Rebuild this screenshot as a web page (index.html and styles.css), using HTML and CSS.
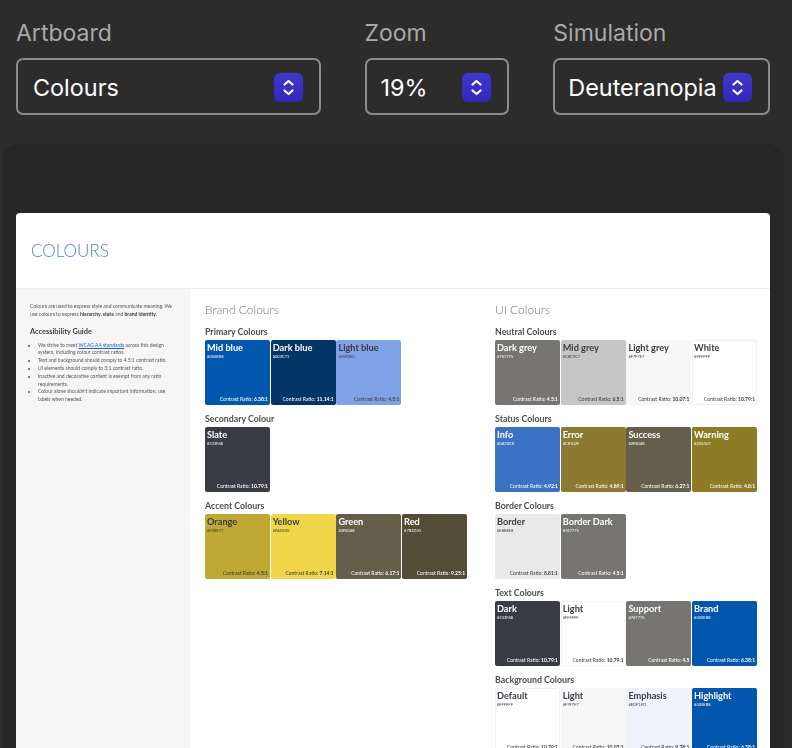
FILE: index.html
```html
<!DOCTYPE html>
<html lang="en">

<head>
    <meta charset="UTF-8">
    <title>Colour Simulation</title>
    <link rel="stylesheet" href="styles.css">
</head>

<body>
    <svg class="defs" width="0" height="0">
        <symbol id="updown" viewBox="0 0 29 29">
            <path d="M10.5 11.5 14.5 8l4 3.500M10.500 17.500l4 3.500 4-3.500" fill="none" stroke="#fff" stroke-width="2.200" stroke-linecap="round" stroke-linejoin="round" />
        </symbol>
    </svg>

    <div class="controls">
        <div class="field field-artboard">
            <div class="field-label">Artboard</div>
            <div class="select"><span>Colours</span><svg class="select-icon"><use href="#updown" /></svg></div>
        </div>
        <div class="field field-zoom">
            <div class="field-label">Zoom</div>
            <div class="select"><span>19%</span><svg class="select-icon"><use href="#updown" /></svg></div>
        </div>
        <div class="field field-simulation">
            <div class="field-label">Simulation</div>
            <div class="select"><span>Deuteranopia</span><svg class="select-icon"><use href="#updown" /></svg></div>
        </div>
    </div>

    <div class="panel">
        <div class="artboard">
            <div class="artboard-header">COLOURS</div>
            <div class="artboard-body">
                <div class="sidebar">
                    <p>Colours are used to express style and communicate meaning. We use colours to express <b>hierarchy, state</b> and <b>brand identity</b>.</p>
                    <h4>Accessibility Guide</h4>
                    <ul>
                        <li>We strive to meet <a href="#">WCAG AA standards</a> across this design system, including colour contrast ratios.</li>
                        <li>Text and background should comply to 4.5:1 contrast ratio.</li>
                        <li>UI elements should comply to 3:1 contrast ratio.</li>
                        <li>Inactive and decorative content is exempt from any ratio requirements.</li>
                        <li>Colour alone shouldn't indicate important information, use labels when needed.</li>
                    </ul>
                </div>

                <div class="col">
                    <h2>Brand Colours</h2>

                    <h3>Primary Colours</h3>
                    <div class="swatches">
                        <div class="swatch on-dark c-midblue"><strong>Mid blue</strong><small>#005EB8</small><em>Contrast Ratio: <b>6.38:1</b></em></div>
                        <div class="swatch on-dark c-darkblue"><strong>Dark blue</strong><small>#003C71</small><em>Contrast Ratio: <b>11.14:1</b></em></div>
                        <div class="swatch c-lightblue"><strong>Light blue</strong><small>#5080E0</small><em>Contrast Ratio: <b>4.5:1</b></em></div>
                    </div>

                    <h3>Secondary Colour</h3>
                    <div class="swatches">
                        <div class="swatch on-dark c-slate"><strong>Slate</strong><small>#333F48</small><em>Contrast Ratio: <b>10.79:1</b></em></div>
                    </div>

                    <h3>Accent Colours</h3>
                    <div class="swatches">
                        <div class="swatch c-orange"><strong>Orange</strong><small>#E98E77</small><em>Contrast Ratio: <b>4.5:1</b></em></div>
                        <div class="swatch c-yellow"><strong>Yellow</strong><small>#FAC820</small><em>Contrast Ratio: <b>7.14:1</b></em></div>
                        <div class="swatch on-dark c-olive"><strong>Green</strong><small>#2F8348</small><em>Contrast Ratio: <b>6.17:1</b></em></div>
                        <div class="swatch on-dark c-red"><strong>Red</strong><small>#7B2D25</small><em>Contrast Ratio: <b>9.25:1</b></em></div>
                    </div>
                </div>

                <div class="col">
                    <h2>UI Colours</h2>

                    <h3>Neutral Colours</h3>
                    <div class="swatches">
                        <div class="swatch on-dark c-darkgrey"><strong>Dark grey</strong><small>#767775</small><em>Contrast Ratio: <b>4.5:1</b></em></div>
                        <div class="swatch c-midgrey"><strong>Mid grey</strong><small>#C8C9C7</small><em>Contrast Ratio: <b>6.5:1</b></em></div>
                        <div class="swatch c-lightgrey"><strong>Light grey</strong><small>#F7F7F7</small><em>Contrast Ratio: <b>10.07:1</b></em></div>
                        <div class="swatch c-white"><strong>White</strong><small>#FFFFFF</small><em>Contrast Ratio: <b>10.79:1</b></em></div>
                    </div>

                    <h3>Status Colours</h3>
                    <div class="swatches">
                        <div class="swatch on-dark c-info"><strong>Info</strong><small>#0A70C8</small><em>Contrast Ratio: <b>4.92:1</b></em></div>
                        <div class="swatch on-dark c-error"><strong>Error</strong><small>#C8102F</small><em>Contrast Ratio: <b>4.89:1</b></em></div>
                        <div class="swatch on-dark c-olive"><strong>Success</strong><small>#2F8048</small><em>Contrast Ratio: <b>6.27:1</b></em></div>
                        <div class="swatch on-dark c-warning"><strong>Warning</strong><small>#C05107</small><em>Contrast Ratio: <b>4.8:1</b></em></div>
                    </div>

                    <h3>Border Colours</h3>
                    <div class="swatches">
                        <div class="swatch c-border"><strong>Border</strong><small>#E8E8E8</small><em>Contrast Ratio: <b>8.81:1</b></em></div>
                        <div class="swatch on-dark c-darkgrey"><strong>Border Dark</strong><small>#767775</small><em>Contrast Ratio: <b>4.5:1</b></em></div>
                    </div>

                    <h3>Text Colours</h3>
                    <div class="swatches">
                        <div class="swatch on-dark c-slate"><strong>Dark</strong><small>#333F48</small><em>Contrast Ratio: <b>10.79:1</b></em></div>
                        <div class="swatch c-white"><strong>Light</strong><small>#FFFFFF</small><em>Contrast Ratio: <b>10.79:1</b></em></div>
                        <div class="swatch on-dark c-darkgrey"><strong>Support</strong><small>#767775</small><em>Contrast Ratio: <b>4.5</b></em></div>
                        <div class="swatch on-dark c-midblue"><strong>Brand</strong><small>#005EB8</small><em>Contrast Ratio: <b>6.38:1</b></em></div>
                    </div>

                    <h3>Background Colours</h3>
                    <div class="swatches">
                        <div class="swatch c-white"><strong>Default</strong><small>#FFFFFF</small><em>Contrast Ratio: <b>10.79:1</b></em></div>
                        <div class="swatch c-lightgrey"><strong>Light</strong><small>#F7F7F7</small><em>Contrast Ratio: <b>10.07:1</b></em></div>
                        <div class="swatch c-emphasis"><strong>Emphasis</strong><small>#EDF1FD</small><em>Contrast Ratio: <b>9.78:1</b></em></div>
                        <div class="swatch on-dark c-midblue"><strong>Highlight</strong><small>#005EB8</small><em>Contrast Ratio: <b>6.38:1</b></em></div>
                    </div>
                </div>
            </div>
        </div>
    </div>
</body>

</html>
```

FILE: styles.css
```css
html,
body {
    height: 748px;
    overflow: hidden;
}

body {
    margin: 0;
    background-color: #2c2c2c;
    font-family: Inter, "Liberation Sans", sans-serif;
}

.defs {
    position: absolute;
}

/* top controls */
.controls {
    display: flex;
    gap: 44px;
    padding: 19px 22px 0 16px;
    height: 126px;
    box-sizing: border-box;
}

.field-artboard {
    width: 305px;
}

.field-zoom {
    width: 145px;
}

.field-simulation {
    width: 217px;
}

.field-label {
    color: #a9a9a9;
    font-size: 23px;
    line-height: 29px;
    margin-bottom: 10px;
}

.select {
    display: flex;
    justify-content: space-between;
    align-items: center;
    height: 57px;
    box-sizing: border-box;
    padding: 1px 16px 0 15px;
    border: 2px solid #8c8c8c;
    border-radius: 7px;
    color: #fff;
    font-size: 23.400px;
}

.field-zoom .select {
    padding-left: 14px;
}

.field-simulation .select {
    padding-left: 13px;
}

.select-icon {
    width: 29px;
    height: 29px;
    flex-shrink: 0;
    border-radius: 6px;
    background: linear-gradient(#3f38c9, #3426bf);
}

/* preview */
.panel {
    margin: 18px 8px 0 2px;
    height: 620px;
    padding: 69px 14px 0 14px;
    background-color: #262626;
    border-radius: 16px 16px 0 0;
}

.artboard {
    height: 560px;
    background-color: #fff;
    border-radius: 4px 4px 0 0;
    overflow: hidden;
    color: #3a3c45;
    font-family: Lato, "Open Sans", sans-serif;
    filter: blur(0.500px);
}

.artboard-header {
    height: 76px;
    box-sizing: border-box;
    padding: 27px 0 0 15px;
    border-bottom: 1px solid #efefef;
    color: #4f7fd6;
    font-size: 17px;
    line-height: 22px;
    font-weight: 300;
}

.artboard-body {
    display: flex;
}

.sidebar {
    width: 174px;
    height: 470px;
    flex-shrink: 0;
    box-sizing: border-box;
    padding: 14px 17px 0 14px;
    background-color: #f6f6f6;
    font-size: 5px;
    line-height: 7.800px;
    color: #55575e;
}

.sidebar p {
    margin: 0 0 8px 0;
}

.sidebar b {
    font-weight: 700;
    color: #3a3c45;
}

.sidebar h4 {
    margin: 0 0 5px 0;
    color: #3a3c45;
    font-size: 7.400px;
    line-height: 10px;
    font-weight: 700;
}

.sidebar ul {
    margin: 0;
    padding: 0 0 0 8px;
}

.sidebar a {
    color: #1f5fc0;
}

.col {
    width: 290px;
    flex-shrink: 0;
    padding: 13px 0 0 15px;
    box-sizing: border-box;
}

.col h2 {
    margin: 0 0 10px 0;
    color: #777;
    font-size: 12px;
    line-height: 15px;
    font-weight: 300;
}

.col h3 {
    margin: 0 0 3px 0;
    font-size: 8.800px;
    line-height: 10px;
    font-weight: 700;
    color: #4b4d54;
}

.swatches {
    display: flex;
    gap: 0.700px;
    margin-bottom: 9px;
}

.swatch {
    display: flex;
    flex-direction: column;
    width: 65px;
    height: 65px;
    box-sizing: border-box;
    padding: 2px 2px 2px 2px;
    border-radius: 2px;
    color: #3a3c45;
}

.swatch strong {
    font-size: 9.200px;
    line-height: 12px;
    font-weight: 700;
}

.swatch small {
    font-size: 4px;
    line-height: 6px;
}

.swatch em {
    margin-top: auto;
    font-size: 5px;
    line-height: 7px;
    font-style: normal;
    text-align: right;
}

.on-dark {
    color: #fff;
}

.c-midblue { background-color: #0256ae; }
.c-darkblue { background-color: #043569; }
.c-lightblue { background-color: #7fa1e6; }
.c-slate { background-color: #3a3c45; }
.c-orange { background-color: #bfa833; }
.c-yellow { background-color: #efd548; }
.c-olive { background-color: #665e4a; }
.c-red { background-color: #544c36; }
.c-darkgrey { background-color: #767572; }
.c-midgrey { background-color: #c6c6c6; }
.c-lightgrey { background-color: #f7f7f7; }
.c-white { background-color: #fff; box-shadow: inset 0 0 0 1px #f1f1f1; }
.c-info { background-color: #3b72c4; }
.c-error { background-color: #8b7a30; }
.c-warning { background-color: #8d7b26; }
.c-border { background-color: #e9e9e9; }
.c-emphasis { background-color: #f0f3fd; }
```
